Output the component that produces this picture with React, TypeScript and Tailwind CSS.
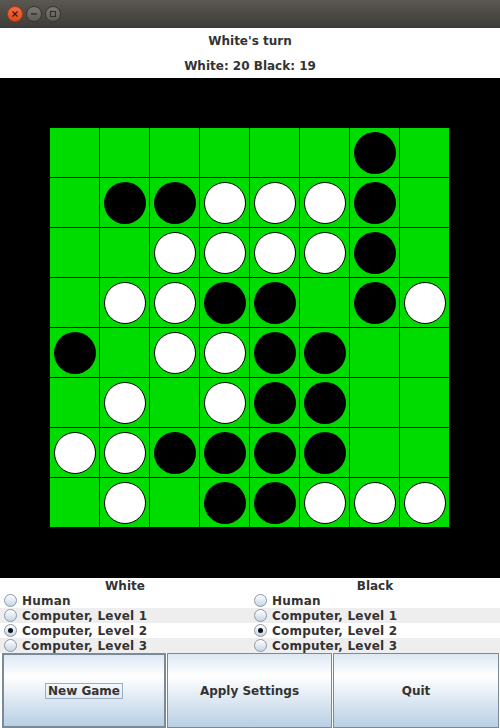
import React from 'react';

const board = [
  '......B.',
  '.BBWWWB.',
  '..WWWWB.',
  '.WWBB.BW',
  'B.WWBB..',
  '.W.WBB..',
  'WWBBBB..',
  '.W.BBWWW',
];

const levels = ['Human', 'Computer, Level 1', 'Computer, Level 2', 'Computer, Level 3'];

function Radio({ checked }: { checked: boolean }) {
  return (
    <span className="w-[13px] h-[13px] rounded-full border border-[#8b98a6] bg-gradient-to-b from-white to-[#c4d5e6] flex items-center justify-center shrink-0">
      {checked && <span className="w-[5px] h-[5px] rounded-full bg-[#111]" />}
    </span>
  );
}

function PlayerColumn({ title }: { title: string }) {
  return (
    <div className="flex flex-col">
      <div className="h-[15px] flex items-center justify-center leading-none">{title}</div>
      {levels.map((l, i) => (
        <div
          key={l}
          className={`h-[15px] flex items-center gap-[5px] pl-[4px] leading-none ${i % 2 === 1 ? 'bg-[#eeeeee]' : 'bg-white'}`}
        >
          <Radio checked={i === 2} />
          <span className="tracking-[0.2px]">{l}</span>
        </div>
      ))}
    </div>
  );
}

export default function App() {
  return (
    <div className="w-[500px] h-[728px] overflow-hidden bg-white font-['DejaVu_Sans',sans-serif] font-bold text-[12px] text-[#333]">
      {/* title bar */}
      <div className="h-[28px] bg-gradient-to-b from-[#5b5751] to-[#3d3c38] flex items-center gap-[3px] pl-[7px]">
        <span className="w-[16px] h-[16px] rounded-full bg-gradient-to-b from-[#f46d43] to-[#df4a16] border border-[#b23a12] flex items-center justify-center">
          <svg width="8" height="8" viewBox="0 0 8 8">
            <path d="M1.5 1.5 L6.5 6.5 M6.5 1.5 L1.5 6.5" stroke="#3b1a0c" strokeWidth="1.2" />
          </svg>
        </span>
        <span className="w-[16px] h-[16px] rounded-full bg-gradient-to-b from-[#7a7873] to-[#5e5c57] border border-[#36352f] flex items-center justify-center">
          <svg width="8" height="8" viewBox="0 0 8 8">
            <path d="M1 4 H7" stroke="#2f2e2a" strokeWidth="1.4" />
          </svg>
        </span>
        <span className="w-[16px] h-[16px] rounded-full bg-gradient-to-b from-[#7a7873] to-[#5e5c57] border border-[#36352f] flex items-center justify-center">
          <svg width="8" height="8" viewBox="0 0 8 8">
            <rect x="1.5" y="1.5" width="5" height="5" fill="none" stroke="#2f2e2a" strokeWidth="1.1" />
          </svg>
        </span>
      </div>

      {/* status */}
      <div className="h-[25px] flex items-center justify-center">White's turn</div>
      <div className="h-[25px] flex items-center justify-center">White: 20 Black: 19</div>

      {/* board */}
      <div className="h-[500px] bg-black flex items-center justify-center">
        <div className="grid grid-cols-8 w-[400px] h-[400px]">
          {board.flatMap((row, r) =>
            row.split('').map((c, col) => (
              <div
                key={`${r}-${col}`}
                className="w-[50px] h-[50px] bg-[#00dc00] border-r border-b border-black flex items-center justify-center"
              >
                {c === 'B' && <span className="w-[42px] h-[42px] rounded-full bg-black" />}
                {c === 'W' && <span className="w-[42px] h-[42px] rounded-full bg-white border border-black" />}
              </div>
            ))
          )}
        </div>
      </div>

      {/* settings */}
      <div className="grid grid-cols-2">
        <PlayerColumn title="White" />
        <PlayerColumn title="Black" />
      </div>

      {/* buttons */}
      <div className="flex gap-px pl-[2px] pr-px">
        <button className="w-[164px] h-[75px] border-2 border-[#7a8a99] bg-[linear-gradient(to_bottom,#dde8f3_0%,#ffffff_30%,#b8cfe5_100%)] flex items-center justify-center">
          <span className="border border-[#99aec4] px-[2px] py-[1px] leading-none">New Game</span>
        </button>
        <button className="w-[165px] h-[75px] border border-[#7a8a99] bg-[linear-gradient(to_bottom,#dde8f3_0%,#ffffff_30%,#b8cfe5_100%)] flex items-center justify-center">
          Apply Settings
        </button>
        <button className="w-[166px] h-[75px] border border-[#7a8a99] bg-[linear-gradient(to_bottom,#dde8f3_0%,#ffffff_30%,#b8cfe5_100%)] flex items-center justify-center">
          Quit
        </button>
      </div>
    </div>
  );
}
